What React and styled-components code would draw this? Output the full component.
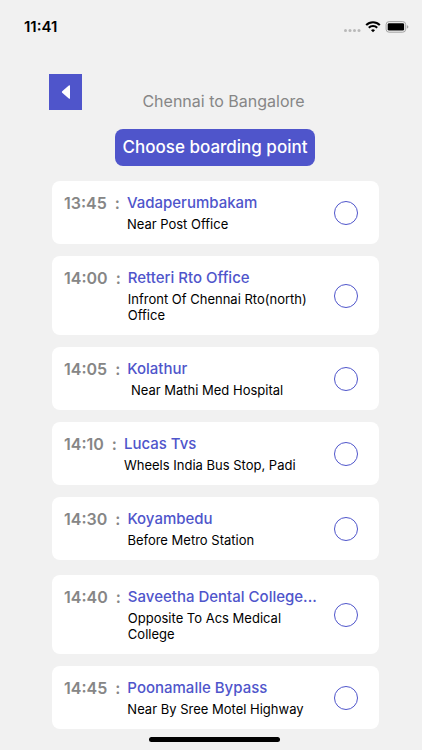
import { useState } from "react";
import styled, { createGlobalStyle } from "styled-components";

const firstPoints = [
	{ time: "13:45", name: "Vadaperumbakam", landmark: "Near Post Office" },
	{
		time: "14:00",
		name: "Retteri Rto Office",
		landmark: "Infront Of Chennai Rto(north) Office",
	},
	{ time: "14:05", name: "Kolathur", landmark: " Near Mathi Med Hospital" },
	{ time: "14:10", name: "Lucas Tvs", landmark: "Wheels India Bus Stop, Padi" },
	{ time: "14:30", name: "Koyambedu", landmark: "Before Metro Station" },
];

const laterPoints = [
	{
		time: "14:40",
		name: "Saveetha Dental College...",
		landmark: "Opposite To Acs Medical College",
	},
	{
		time: "14:45",
		name: "Poonamalle Bypass",
		landmark: "Near By Sree Motel Highway",
	},
];

export default function App() {
	const [selected, setSelected] = useState(null);

	const renderPoint = (point) => (
		<PointCard key={point.time}>
			<Time>{point.time}</Time>
			<Colon>:</Colon>
			<Details>
				<PointName>{point.name}</PointName>
				<Landmark>{point.landmark}</Landmark>
			</Details>
			<Radio
				type="radio"
				name="boarding-point"
				value={point.time}
				checked={selected === point.time}
				onChange={() => setSelected(point.time)}
			/>
		</PointCard>
	);

	return (
		<>
			<GlobalStyle />
			<Screen>
				<StatusBar>
					<Clock>11:41</Clock>
					<StatusIcons />
				</StatusBar>
				<Header>
					<BackButton type="button" aria-label="Back">
						<svg width="10" height="16" viewBox="0 0 10 16" fill="#fff">
							<path d="M9 2v12q0 1.4-1.2.5L1.2 8.8Q.4 8 1.2 7.2L7.8 1.5Q9 .6 9 2z" />
						</svg>
					</BackButton>
					<Route>Chennai to Bangalore</Route>
				</Header>
				<Heading>Choose boarding point</Heading>
				<Points>
					<PointList>{firstPoints.map(renderPoint)}</PointList>
					<PointList>{laterPoints.map(renderPoint)}</PointList>
				</Points>
				<HomeIndicator />
			</Screen>
		</>
	);
}

function StatusIcons() {
	return (
		<svg width="66" height="14" viewBox="0 0 66 14" aria-hidden="true">
			<g fill="#b9b9b9">
				<circle cx="2.5" cy="10.5" r="1.5" />
				<circle cx="7" cy="10.5" r="1.5" />
				<circle cx="11.5" cy="10.5" r="1.5" />
				<circle cx="16" cy="10.5" r="1.5" />
			</g>
			<g fill="none" stroke="#000" strokeWidth="2.1">
				<path d="M23.2 5.1a9.4 9.4 0 0 1 13.6 0" />
				<path d="M25.8 7.8a5.9 5.9 0 0 1 8.4 0" />
			</g>
			<path d="M30 12.3l-2-2.1a2.9 2.9 0 0 1 4 0z" />
			<rect
				x="43.1"
				y="1.6"
				width="19.6"
				height="10.6"
				rx="3"
				fill="none"
				stroke="#a3a3a3"
			/>
			<rect x="44.7" y="3.2" width="16.4" height="7.4" rx="1.4" />
			<path d="M63.9 5.2q1.5.4 1.5 1.7t-1.5 1.7z" fill="#a3a3a3" />
		</svg>
	);
}

const GlobalStyle = createGlobalStyle`
	* {
		box-sizing: border-box;
	}
	body {
		margin: 0;
		background-color: #f1f1f1;
		font-family: Inter, "Liberation Sans", sans-serif;
	}
`;

const Screen = styled.main`
	min-height: 100vh;
	display: flex;
	flex-direction: column;
	background-color: #f1f1f1;
`;

const StatusBar = styled.div`
	display: flex;
	align-items: center;
	justify-content: space-between;
	padding: 17px 13px 0 24px;
`;

const Clock = styled.span`
	font-size: 15px;
	font-weight: 600;
	line-height: 20px;
	color: #000;
`;

const Header = styled.header`
	display: grid;
	grid-template-columns: 33px 1fr 33px;
	align-items: end;
	padding: 37px 24px 0 49px;
`;

const BackButton = styled.button`
	display: flex;
	align-items: center;
	justify-content: center;
	height: 36px;
	padding: 0;
	border: none;
	background-color: #4f55cb;
	cursor: pointer;
`;

const Route = styled.span`
	text-align: center;
	font-size: 16px;
	font-weight: 400;
	line-height: 18px;
	color: #868686;
`;

const Heading = styled.h1`
	align-self: center;
	margin: 19px 0 0 8px;
	padding: 6px 8px;
	border-radius: 8px;
	background-color: #4f55cb;
	color: #fff;
	font-size: 17px;
	font-weight: 500;
	line-height: 25px;
`;

const Points = styled.div`
	display: flex;
	flex-direction: column;
	gap: 15px;
	padding: 15px 43px 8px 52px;
`;

const PointList = styled.div`
	display: flex;
	flex-direction: column;
	gap: 12px;
`;

const PointCard = styled.label`
	display: flex;
	align-items: flex-start;
	padding: 12px 21px 12px 12px;
	border-radius: 8px;
	background-color: #fff;
	font-size: 16px;
	line-height: 20px;
	cursor: pointer;
`;

const Time = styled.span`
	font-weight: 600;
	color: #868686;
`;

const Colon = styled.span`
	padding: 0 7px 0 8px;
	font-weight: 600;
	color: #868686;
`;

const Details = styled.span`
	flex: 1;
	min-width: 0;
	display: flex;
	flex-direction: column;
	gap: 3px;
`;

const PointName = styled.span`
	overflow: hidden;
	text-overflow: ellipsis;
	white-space: nowrap;
	font-size: 15px;
	font-weight: 500;
	color: #4f55cb;
`;

const Landmark = styled.span`
	white-space: pre-wrap;
	font-size: 13px;
	line-height: 16px;
	color: #000;
`;

const Radio = styled.input`
	appearance: none;
	flex: none;
	align-self: center;
	width: 24px;
	height: 24px;
	margin: 0 0 0 12px;
	border: 1px solid #4f55cb;
	border-radius: 50%;
	cursor: pointer;
	&:checked {
		background-color: #4f55cb;
		box-shadow: inset 0 0 0 4px #fff;
	}
`;

const HomeIndicator = styled.div`
	align-self: center;
	width: 131px;
	height: 5px;
	margin: 0 0 8px 6px;
	border-radius: 3px;
	background-color: #000;
`;
